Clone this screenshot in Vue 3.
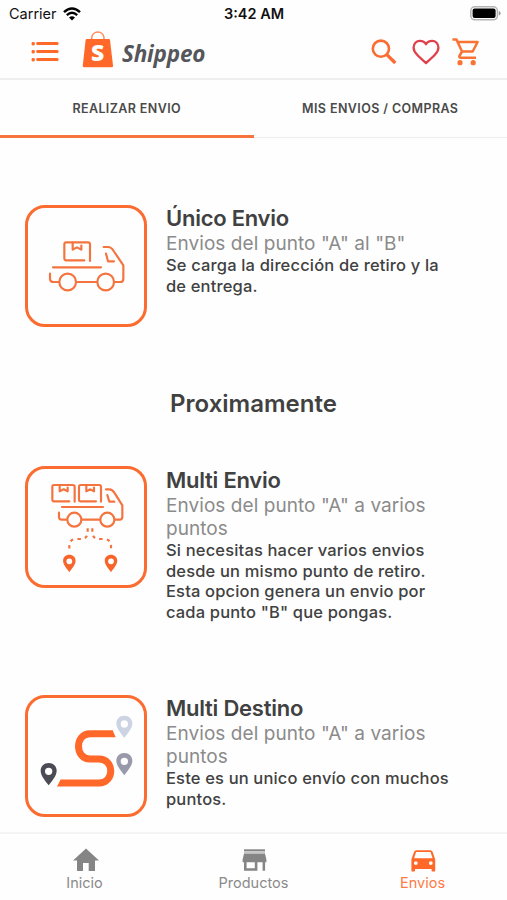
<template>
  <div class="screen">
    <div class="status-bar">
      <div class="carrier">
        <span>Carrier</span>
        <svg width="18" height="14" viewBox="0 0 18 14">
          <path d="M1 5.2 Q9 -2.2 17 5.2" fill="none" stroke="#000" stroke-width="2.5" />
          <path d="M3.8 8.2 Q9 3.4 14.2 8.2" fill="none" stroke="#000" stroke-width="2.3" />
          <path d="M6 10.5 Q9 7.8 12 10.5 L9 13.5 Z" fill="#000" />
        </svg>
      </div>
      <span class="time">3:42 AM</span>
      <svg class="battery" width="31" height="15" viewBox="0 0 31 15">
        <rect x=".8" y=".8" width="26.6" height="13" rx="4" fill="#fff" stroke="#b4b4b4" stroke-width="1.5" />
        <rect x="2.6" y="2.6" width="23" height="9.4" rx="2" fill="#000" />
        <path d="M28.8 5 Q30.6 5.6 30.6 7.3 Q30.6 9 28.8 9.6 Z" fill="#999" />
      </svg>
    </div>

    <header class="header">
      <svg class="menu" width="28" height="20" viewBox="0 0 28 20">
        <g fill="#ff6a2b">
          <template v-for="y in [0, 8, 16]" :key="y">
            <rect x=".5" :y="y" width="3.4" height="3.4" rx="1.4" />
            <rect x="5.2" :y="y + 0.1" width="22.4" height="3" rx="1.3" />
          </template>
        </g>
      </svg>
      <div class="logo">
        <svg width="32" height="38" viewBox="0 0 32 38">
          <path d="M9.7 11 V7.5 A6.2 6.2 0 0 1 22 7.5 V11" fill="none" stroke="#ff8a58" stroke-width="1.5" />
          <path d="M4.6 9 H26.8 Q27.8 9 28 10 L31 35.4 Q31.2 37.3 29.5 37.3 H2.2 Q.6 37.3 .8 35.4 L3.6 10 Q3.8 9 4.6 9 Z" fill="#ff6829" />
          <text x="15.6" y="30.8" text-anchor="middle" class="logo-letter">S</text>
        </svg>
        <span class="logo-name">Shippeo</span>
      </div>
      <div class="actions">
        <svg width="26" height="26" viewBox="0 0 26 26" fill="none" stroke="#fb6c33">
          <circle cx="9.9" cy="9.7" r="8.1" stroke-width="2.6" />
          <path d="M15.8 15.6 L24.3 24" stroke-width="3.4" />
        </svg>
        <svg width="28" height="26" viewBox="0 0 28 26">
          <path
            d="M14 24.1 C6.5 17.6 1.6 13.4 1.6 8.4 C1.6 4.6 4.4 1.9 7.9 1.9 C10.4 1.9 12.8 3.1 14 5.3 C15.2 3.1 17.6 1.9 20.1 1.9 C23.6 1.9 26.4 4.6 26.4 8.4 C26.4 13.4 21.5 17.6 14 24.1 Z"
            fill="none"
            stroke="#e0404c"
            stroke-width="2.3"
            stroke-linejoin="round"
          />
        </svg>
        <svg width="28" height="28" viewBox="0 0 28 28">
          <g fill="none" stroke="#f97434" stroke-width="2.5" stroke-linejoin="round">
            <path d="M.4 1.4 H4.4 L10 13.5 L7.4 18 Q6.8 19.7 8.8 19.7 H24" />
            <path d="M5.6 4 H25.6 L20.7 13.5 H10" />
          </g>
          <circle cx="8" cy="24.7" r="2.6" fill="#f97434" />
          <circle cx="21.2" cy="24.7" r="2.6" fill="#f97434" />
        </svg>
      </div>
    </header>

    <div class="tabs">
      <button
        v-for="tab in tabs"
        :key="tab.id"
        class="tab"
        :class="{ active: activeTab === tab.id }"
        @click="activeTab = tab.id"
      >
        {{ tab.label }}
      </button>
    </div>

    <main class="content">
      <section class="card">
        <div class="card-icon">
          <svg viewBox="39 39 348 348">
            <g class="line-art">
              <path d="M208 196 H154 Q148 196 148 190 V148 Q148 142 154 142 H219 Q225 142 225 148 V198" />
              <path d="M173 143 V164 L186 157 L199 164 V152" />
              <path d="M114 217 H258" />
              <path d="M105 236 V253 Q106 261 116 261 H132" />
              <path d="M184 261 H246" />
              <path d="M298 261 H316 Q325 261 325 251 V211 L296 168 Q289 156 279 156 H266" />
              <path d="M273 176 L279 199 H297" />
              <circle cx="158" cy="261" r="25" />
              <circle cx="272" cy="261" r="25" />
            </g>
          </svg>
        </div>
        <div class="card-text">
          <h2>Único Envio</h2>
          <h3>Envios del punto "A" al "B"</h3>
          <p>Se carga la dirección de retiro y la<br />de entrega.</p>
        </div>
      </section>

      <h1 class="soon">Proximamente</h1>

      <section class="card multi">
        <div class="card-icon">
          <svg viewBox="39 42 348 348">
            <g class="line-art">
              <path d="M163 139 H117 Q112 139 112 134 V95 Q112 90 117 90 H173 Q179 90 179 95 V140" />
              <path d="M134 91 V109 L146 103 L158 109 V98" />
              <path d="M243 139 H197 Q192 139 192 134 V95 Q192 90 197 90 H252 Q258 90 258 95 V140" />
              <path d="M214 91 V109 L226 103 L237 109 V98" />
              <path d="M141 156 H264" />
              <path d="M132 173 V187 Q133 194 140 194 H154" />
              <path d="M201 194 H253" />
              <path d="M300 194 H314 Q322 194 322 185 V151 L298 113 Q292 103 283 103 H273" />
              <path d="M277 120 L283 140 H298" />
              <circle cx="178" cy="194" r="21" />
              <circle cx="277" cy="194" r="21" />
              <path d="M218 220 V234 Q217 252 195 252 H184 Q163 253 163 272 V290" class="dashed" />
              <path d="M232 220 V234 Q233 252 255 252 H266 Q288 253 288 272 V290" class="dashed" />
            </g>
            <g class="pin-orange">
              <path :d="pin" transform="translate(163 319) scale(.78)" />
              <path :d="pin" transform="translate(288 319) scale(.78)" />
            </g>
          </svg>
        </div>
        <div class="card-text">
          <h2>Multi Envio</h2>
          <h3>Envios del punto "A" a varios<br />puntos</h3>
          <p>
            Si necesitas hacer varios envios<br />desde un mismo punto de retiro.<br />Esta
            opcion genera un envio por<br />cada punto "B" que pongas.
          </p>
        </div>
      </section>

      <section class="card destiny">
        <div class="card-icon">
          <svg viewBox="39 39 348 348">
            <path
              d="M292 146 H225 C179 146 179 222 225 222 H252 C299 222 299 294 252 294 H137"
              fill="none"
              stroke="#ff6829"
              stroke-width="21"
            />
            <path d="M291 135.500 H293 L302 156.500 H291 Z M138 283.500 V304.500 H126 L137 283.500 Z" fill="#ff6829" />
            <path :d="pin" transform="translate(101 259)" fill="#4b4b55" fill-rule="evenodd" />
            <path :d="pin" transform="translate(328 117)" fill="#ccd3e3" fill-rule="evenodd" />
            <path :d="pin" transform="translate(328 229)" fill="#9899aa" fill-rule="evenodd" />
          </svg>
        </div>
        <div class="card-text">
          <h2>Multi Destino</h2>
          <h3>Envios del punto "A" a varios<br />puntos</h3>
          <p>Este es un unico envío con muchos<br />puntos.</p>
        </div>
      </section>
    </main>

    <nav class="bottom-nav">
      <a class="nav-item">
        <svg width="28" height="28" viewBox="0 0 28 28">
          <path d="M12 25 V17 H17.7 V25 H24 V14.4 H28 L15 2.4 L2 14.4 H6 V25 Z" fill="#858585" />
        </svg>
        <span>Inicio</span>
      </a>
      <a class="nav-item">
        <svg width="28" height="28" viewBox="0 0 28 28">
          <path d="M4 3.3 H25 V5.2 H4 Z" fill="#858585" />
          <path d="M4 5.2 H25 V7.8 H4 Z" fill="#c4c4c4" />
          <path d="M4 7.8 H25 L26.4 13.6 V16.2 H25.1 V24.8 H22.6 V16.2 H17.4 V24.8 H4 V16.2 H2.6 V13.6 Z M6.6 16.2 V22.2 H14.8 V16.2 Z" fill="#858585" fill-rule="evenodd" />
        </svg>
        <span>Productos</span>
      </a>
      <a class="nav-item current">
        <svg width="28" height="28" viewBox="0 0 28 28">
          <path
            d="M5.1 5.8 Q5.7 4.2 7.4 4.2 H21.4 Q23 4.2 23.6 5.8 L26.2 13.6 V24.4 Q26.2 25.6 25 25.6 H23.8 Q22.6 25.6 22.6 24.4 V23 H6 V24.4 Q6 25.6 4.8 25.6 H3.6 Q2.4 25.6 2.4 24.4 V13.6 Z M7.1 6 L5.1 12.3 H23.6 L21.5 6 Z M6.8 15.2 A1.9 1.9 0 1 0 6.8 19 A1.9 1.9 0 1 0 6.8 15.2 Z M21.8 15.2 A1.9 1.9 0 1 0 21.8 19 A1.9 1.9 0 1 0 21.8 15.2 Z"
            fill="#ff6829"
            fill-rule="evenodd"
          />
        </svg>
        <span>Envios</span>
      </a>
    </nav>
  </div>
</template>

<script setup>
import { ref } from 'vue'

const tabs = [
  { id: 'send', label: 'REALIZAR ENVIO' },
  { id: 'mine', label: 'MIS ENVIOS / COMPRAS' }
]

const activeTab = ref('send')

// map pin centred on its hole
const pin = 'M0 -25 C14 -25 24 -15 24 -2 C24 15 7 31 0 42 C-7 31 -24 15 -24 -2 C-24 -15 -14 -25 0 -25 Z M0 -11 A11 11 0 1 0 0 11 A11 11 0 1 0 0 -11 Z'
</script>

<style>
body {
  margin: 0;
  background: #fff;
}
</style>

<style scoped>
.screen {
  width: 507px;
  height: 900px;
  display: flex;
  flex-direction: column;
  overflow: hidden;
  background: #fefefe;
  color: #414141;
  font-family: Inter, "Liberation Sans", sans-serif;
}

.status-bar {
  height: 27px;
  flex: none;
  display: grid;
  grid-template-columns: 1fr auto 1fr;
  align-items: center;
  padding: 0 6px 0 9px;
  box-sizing: border-box;
  color: #111;
}

.carrier {
  display: flex;
  align-items: center;
  gap: 6px;
  font-size: 14.5px;
}

.time {
  margin-right: 2px;
  font-size: 14.5px;
  font-weight: 600;
}

.battery {
  justify-self: end;
}

.header {
  height: 53px;
  flex: none;
  display: flex;
  align-items: center;
  box-sizing: border-box;
  padding: 0 27px 2px 31px;
  border-bottom: 2px solid #eee;
}

.logo {
  display: flex;
  align-items: center;
  margin: -6px 0 0 23px;
}

.logo-letter {
  font: 800 23px "Open Sans", sans-serif;
  fill: #fff;
}

.logo-name {
  margin: 10px 0 0 8px;
  font: italic 700 22.5px/26px "Open Sans", sans-serif;
  letter-spacing: -0.2px;
  color: #55565b;
}

.actions {
  display: flex;
  align-items: center;
  gap: 15px;
  margin-left: auto;
}

.actions svg:last-child {
  margin-left: -3px;
}

.tabs {
  height: 58px;
  flex: none;
  display: flex;
}

.tab {
  flex: 1;
  padding: 0;
  border: none;
  border-bottom: 1px solid #eee;
  background: none;
  color: #4a4a4a;
  font: 600 12.5px Inter, sans-serif;
  letter-spacing: 0.4px;
  cursor: pointer;
}

.tab.active {
  border-bottom: 3px solid #f8743e;
  padding-top: 2px;
}

.content {
  flex: 1;
  min-height: 0;
  padding: 67px 25px 0;
  overflow: hidden;
}

.card {
  display: flex;
  gap: 19px;
}

.card-icon {
  width: 122px;
  height: 122px;
  flex: none;
  box-sizing: border-box;
  border: 3px solid #fb6c30;
  border-radius: 20px;
}

.card-icon svg {
  display: block;
  width: 116px;
  height: 116px;
}

.line-art {
  fill: none;
  stroke: #f47440;
  stroke-width: 6.5;
  stroke-linecap: round;
  stroke-linejoin: round;
}

.dashed {
  stroke-dasharray: 10 12;
  stroke-linecap: butt;
}

.pin-orange {
  fill: #f8652a;
  fill-rule: evenodd;
}

.card-text h2 {
  margin: 0;
  font-size: 22px;
  line-height: 26px;
  font-weight: 600;
  letter-spacing: -0.25px;
}

.card-text h3 {
  margin: 1px 0 0;
  color: #8b8b8b;
  font-size: 19px;
  line-height: 23px;
  font-weight: 400;
  letter-spacing: 0.06px;
}

.card-text p {
  margin: 0;
  font-size: 16.5px;
  line-height: 20.6px;
  font-weight: 500;
  letter-spacing: 0.16px;
  white-space: nowrap;
}

.soon {
  margin: 62px 0 0;
  height: 77px;
  text-align: center;
  font-size: 24px;
  line-height: 30px;
  font-weight: 600;
}

.multi {
  height: 155px;
}

.multi .card-text {
  padding-top: 1px;
}

.destiny {
  margin-top: 74px;
}

.bottom-nav {
  height: 68px;
  flex: none;
  display: flex;
  box-sizing: border-box;
  border-top: 2px solid #f4f4f4;
}

.nav-item {
  flex: 1;
  display: flex;
  flex-direction: column;
  align-items: center;
  padding-top: 12px;
  color: #8a8a8a;
  font-size: 14.5px;
  line-height: 17px;
}

.nav-item.current {
  color: #ff7a45;
}
</style>
